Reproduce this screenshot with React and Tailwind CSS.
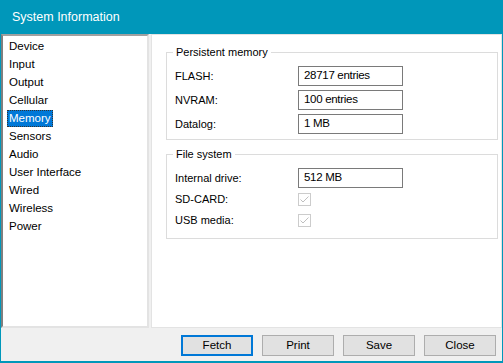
import { useState } from "react";

const pages = [
  "Device",
  "Input",
  "Output",
  "Cellular",
  "Memory",
  "Sensors",
  "Audio",
  "User Interface",
  "Wired",
  "Wireless",
  "Power",
];

function TextBox({ value }) {
  return (
    <div className="w-[105px] h-[20px] border border-[#7A7A7A] bg-white pl-[5px] flex items-center text-[11.5px] tracking-[-0.3px] text-black">
      {value}
    </div>
  );
}

function CheckBox() {
  return (
    <div className="w-[13px] h-[13px] border border-[#CCCCCC] bg-white flex items-center justify-center">
      <svg width="11" height="11" viewBox="0 0 11 11">
        <path d="M1.5 5.5 L4 8 L9.5 2.5" fill="none" stroke="#BFBFBF" strokeWidth="1" />
      </svg>
    </div>
  );
}

function Row({ label, children, h = "h-[20px]" }) {
  return (
    <div className={`flex items-center ${h}`}>
      <span className="w-[131px] pl-[8px] shrink-0">{label}</span>
      {children}
    </div>
  );
}

function Button({ label, focused }) {
  return (
    <button
      className={
        "w-[72px] h-[21px] bg-[#E1E1E1] text-[11.5px] text-black " +
        (focused ? "border-2 border-[#0078D7]" : "border border-[#ADADAD]")
      }
    >
      {label}
    </button>
  );
}

export default function App() {
  const [selected, setSelected] = useState("Memory");

  return (
    <div
      className="w-[503px] h-[363px] bg-[#0097BA] flex flex-col text-[11px] text-black"
      style={{ fontFamily: '"Liberation Sans", Arial, sans-serif' }}
    >
      <div className="h-[34px] shrink-0 flex items-center pl-[12px] text-white text-[12.5px]">
        System Information
      </div>
      <div className="flex-1 mx-[1px] mb-[2px] bg-[#F0F0F0] flex flex-col">
        <div className="flex h-[294px] gap-[2px]">
          <div className="w-[148px] bg-white border-l-2 border-t-2 border-l-[#7F7F7F] border-t-[#A0A0A0] border-r-2 border-b-2 border-r-[#E3E3E3] border-b-[#E3E3E3] pt-[1px] pl-[4px] text-[11.5px]">
            {pages.map((p) => (
              <div key={p} className="h-[18px] flex items-center" onClick={() => setSelected(p)}>
                <span
                  className={
                    "px-[2px] leading-[17px] " +
                    (selected === p
                      ? "bg-[#0078D7] text-white outline-1 outline-dotted outline-[#333] -outline-offset-1"
                      : "")
                  }
                >
                  {p}
                </span>
              </div>
            ))}
          </div>
          <div className="flex-1 bg-white border border-[#E3E3E3] pl-[14px] pr-[3px] pt-[10px]">
            <fieldset className="border border-[#DCDCDC] pb-[5px] pt-[7px]">
              <legend className="ml-[6px] px-[3px] leading-[14px]">Persistent memory</legend>
              <div className="flex flex-col gap-[4px]">
                <Row label="FLASH:">
                  <TextBox value="28717 entries" />
                </Row>
                <Row label="NVRAM:">
                  <TextBox value="100 entries" />
                </Row>
                <Row label="Datalog:">
                  <TextBox value="1 MB" />
                </Row>
              </div>
            </fieldset>
            <fieldset className="border border-[#DCDCDC] mt-[7px] pb-[8px] pt-[7px]">
              <legend className="ml-[6px] px-[3px] leading-[14px]">File system</legend>
              <div className="flex flex-col gap-[1px]">
                <Row label="Internal drive:">
                  <TextBox value="512 MB" />
                </Row>
                <Row label="SD-CARD:">
                  <CheckBox />
                </Row>
                <Row label="USB media:">
                  <CheckBox />
                </Row>
              </div>
            </fieldset>
          </div>
        </div>
        <div className="flex justify-end gap-[9px] pr-[6px] pt-[7px]">
          <Button label="Fetch" focused />
          <Button label="Print" />
          <Button label="Save" />
          <Button label="Close" />
        </div>
      </div>
    </div>
  );
}
